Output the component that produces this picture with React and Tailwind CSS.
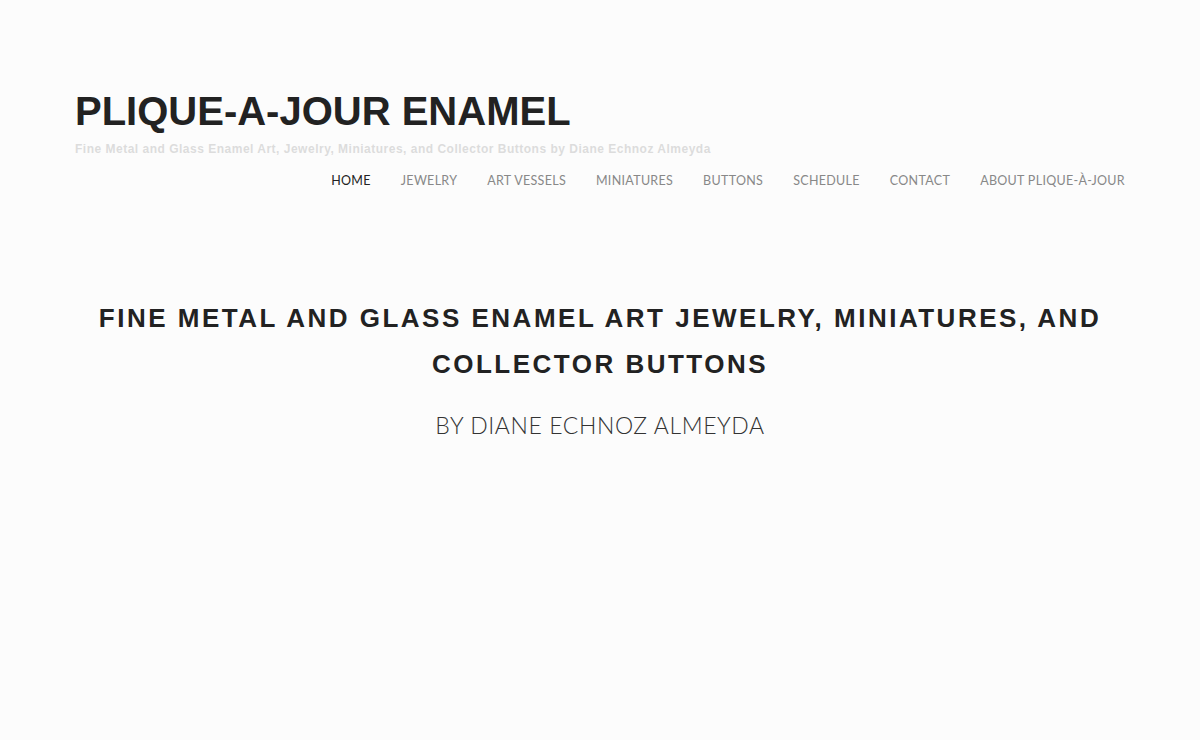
export default function App() {
  const nav = ['Home', 'Jewelry', 'Art Vessels', 'Miniatures', 'Buttons', 'Schedule', 'Contact', 'About Plique-à-Jour'];

  return (
    <div className="min-h-screen bg-[#fcfcfc] font-['Liberation_Sans',Arial,sans-serif]">
      {/* Header */}
      <header className="px-[75px] pt-[87px]">
        <h1 className="text-[40px] leading-[48px] font-bold text-[#222]">PLIQUE-A-JOUR ENAMEL</h1>
        <p className="mt-[7px] text-[12px] leading-[14px] font-bold tracking-[0.5px] text-[#dcdcdc]">
          Fine Metal and Glass Enamel Art, Jewelry, Miniatures, and Collector Buttons by Diane Echnoz Almeyda
        </p>
        <nav className="mt-[17px] flex justify-end gap-[30px] font-['Lato',sans-serif]">
          {nav.map((item, i) => (
            <a
              key={item}
              href="#"
              className={`text-[12.5px] leading-[16px] uppercase tracking-[0.3px] ${i === 0 ? 'text-[#222]' : 'text-[#888]'}`}
            >
              {item}
            </a>
          ))}
        </nav>
      </header>

      {/* Intro */}
      <section className="px-[90px] pt-[106px] text-center">
        <h2 className="text-[26px] leading-[46px] font-bold tracking-[2.5px] text-[#222]">
          FINE METAL AND GLASS ENAMEL ART JEWELRY, MINIATURES, AND COLLECTOR BUTTONS
        </h2>
        <p className="mt-[23px] text-[23px] leading-[30px] font-light tracking-[0.6px] text-[#333] font-['Lato',sans-serif]">BY DIANE ECHNOZ ALMEYDA</p>
      </section>
    </div>
  );
}
